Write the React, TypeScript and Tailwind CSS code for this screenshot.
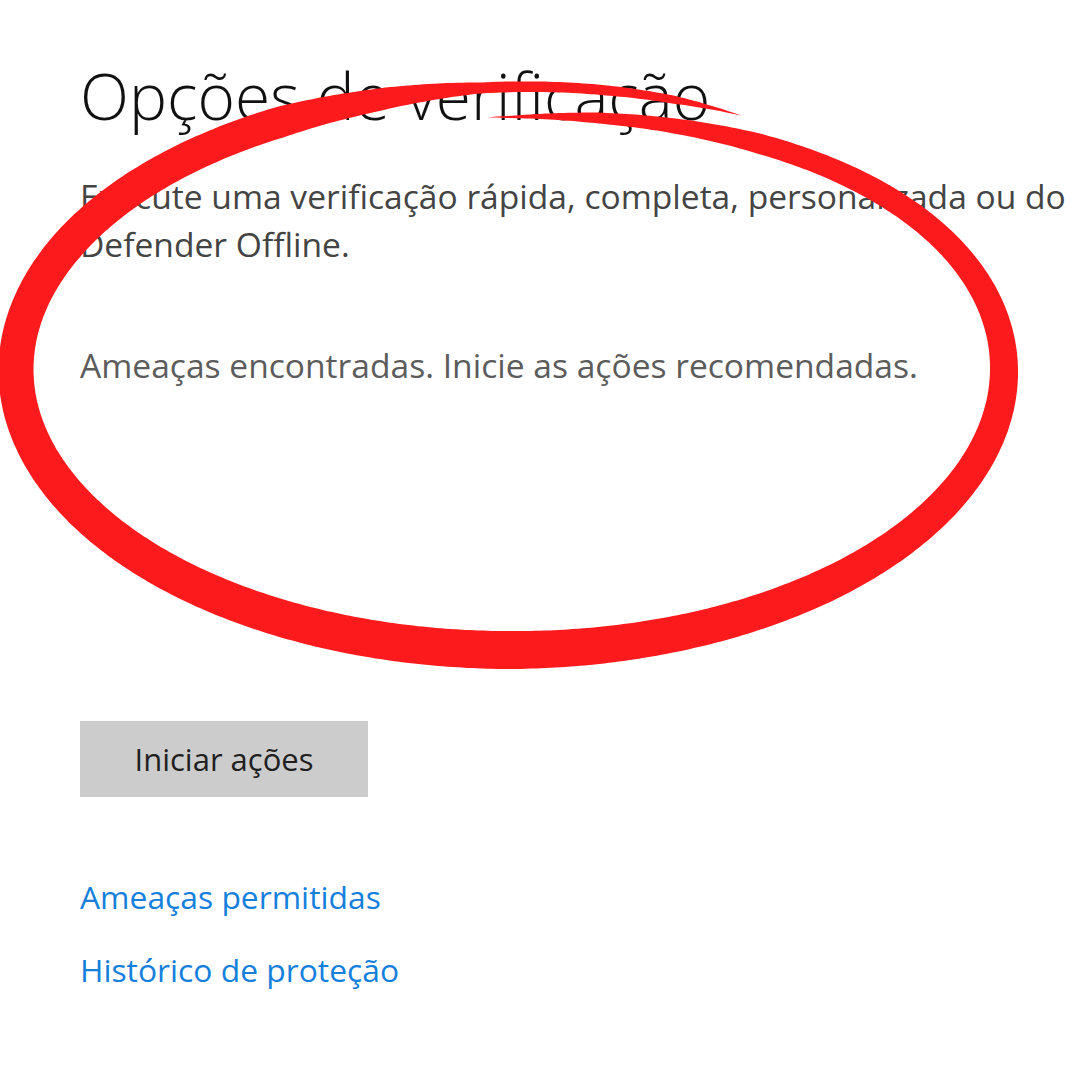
import React, { useMemo } from "react";

// hand-drawn red marker ellipse, built as a ribbon around a slightly spiralling centreline
const widthStops: [number, number][] = [
    [-1.617, 0],
    [-1.387, 11],
    [-1.04, 20],
    [0, 28],
    [1.571, 38],
    [3.14, 35],
    [3.6, 34],
    [4.23, 31],
    [4.45, 22],
    [4.65, 11],
    [4.92, 10],
    [5.05, 8],
    [5.201, 0],
];

function widthAt(t: number) {
    for (let i = 0; i < widthStops.length - 1; i++) {
        const [t0, w0] = widthStops[i];
        const [t1, w1] = widthStops[i + 1];
        if (t >= t0 && t <= t1) return w0 + ((w1 - w0) * (t - t0)) / (t1 - t0);
    }
    return 0;
}

function ryAt(t: number) {
    if (t <= 0) {
        const k = Math.min(1, Math.max(0, (t + Math.PI / 2) / (Math.PI / 2)));
        return 253 + 27 * k;
    }
    if (t > 4.4) return 280 + (t - 4.4) * 10;
    return 280;
}

function MarkerEllipse() {
    const d = useMemo(() => {
        const cx = 510;
        const cy = 370;
        const rx = 494;
        const tStart = -1.617;
        const tEnd = 5.201;
        const steps = 700;
        const left: string[] = [];
        const right: string[] = [];
        for (let i = 0; i <= steps; i++) {
            const t = tStart + ((tEnd - tStart) * i) / steps;
            const ry = ryAt(t);
            const x = cx + rx * Math.cos(t);
            const y = cy + ry * Math.sin(t);
            const dx = -rx * Math.sin(t);
            const dy = ry * Math.cos(t);
            const len = Math.hypot(dx, dy) || 1;
            const nx = dy / len;
            const ny = -dx / len;
            const w = widthAt(t) / 2;
            left.push(`${(x + nx * w).toFixed(1)},${(y + ny * w).toFixed(1)}`);
            right.push(`${(x - nx * w).toFixed(1)},${(y - ny * w).toFixed(1)}`);
        }
        return "M" + left.join(" L") + " L" + right.reverse().join(" L") + " Z";
    }, []);

    return (
        <svg className="absolute left-0 top-0 pointer-events-none" width="1080" height="1080" viewBox="0 0 1080 1080">
            <path d={d} fill="#fd1a1c" />
        </svg>
    );
}

export default function App() {
    return (
        <div className="relative w-[1080px] h-[1080px] bg-white overflow-hidden" style={{ fontFamily: '"Open Sans", "Noto Sans", sans-serif' }}>
            <main className="pl-[80px] pt-[63px]">
                <h1 className="text-[64px] leading-[66px] font-light text-[#111111] whitespace-nowrap">Opções de verificação</h1>
                <div className="mt-[43px] text-[33.6px] leading-[48px] text-[#444444]">
                    <p className="whitespace-nowrap">Execute uma verificação rápida, completa, personalizada ou do</p>
                    <p className="whitespace-nowrap">Defender Offline.</p>
                </div>
                <p className="mt-[73px] text-[33.6px] leading-[48px] text-[#5c5c5c] whitespace-nowrap">Ameaças encontradas. Inicie as ações recomendadas.</p>

                <button className="mt-[332px] w-[288px] h-[76px] bg-[#cccccc] text-[31px] text-[#1f1f1f] flex items-center justify-center" type="button">
                    Iniciar ações
                </button>

                <div className="mt-[76px] flex flex-col gap-[25px] text-[31.8px] leading-[48px] text-[#1580dc]">
                    <a className="whitespace-nowrap">Ameaças permitidas</a>
                    <a className="whitespace-nowrap">Histórico de proteção</a>
                </div>
            </main>
            <MarkerEllipse />
        </div>
    );
}
